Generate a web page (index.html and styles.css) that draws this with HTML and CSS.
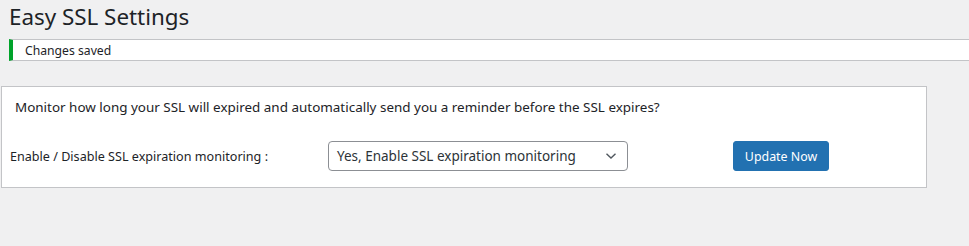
FILE: index.html
```html
<!DOCTYPE html>
<html>
<head>
<meta charset="utf-8">
<link rel="stylesheet" href="styles.css">
</head>
<body>
<div class="wrap">
  <h1 class="title">Easy SSL Settings</h1>
  <div class="notice"><p>Changes saved</p></div>
  <div class="card">
    <p class="intro">Monitor how long your SSL will expired and automatically send you a reminder before the SSL expires?</p>
    <div class="row">
      <label class="label">Enable / Disable SSL expiration monitoring :</label>
      <div class="select">
        <span>Yes, Enable SSL expiration monitoring</span>
        <svg width="12" height="8" viewBox="0 0 12 8"><path d="M1.5 1.8 L6 6 L10.5 1.8" fill="none" stroke="#50575e" stroke-width="1.4"/></svg>
      </div>
      <button class="btn">Update Now</button>
    </div>
  </div>
</div>
</body>
</html>
```
FILE: styles.css
```css
html, body { margin: 0; padding: 0; }
body {
  background: #f0f0f1;
  font-family: "Noto Sans", "Open Sans", sans-serif;
  color: #1d2327;
  width: 969px;
  height: 246px;
  overflow: hidden;
}
.wrap { padding-top: 2px; }
.title {
  font-size: 22.4px;
  font-weight: 400;
  margin: 0 0 0 9px;
  line-height: 30px;
  height: 37px;
}
.notice {
  margin-left: 9px;
  background: #fff;
  border: 1px solid #c3c4c7;
  border-left: 4px solid #00a32a;
  border-right: none;
  height: 20px;
  display: flex;
  align-items: center;
}
.notice p {
  margin: 0 0 0 12px;
  font-size: 12.2px;
}
.card {
  margin: 25px 0 0 1px;
  width: 924px;
  height: 100px;
  background: #fff;
  border: 1px solid #c3c4c7;
}
.intro {
  margin: 10px 0 0 13px;
  font-size: 13.45px;
  line-height: 20px;
}
.row {
  display: flex;
  align-items: center;
  margin-top: 24px;
  padding-left: 8px;
}
.label {
  font-size: 12.6px;
  width: 318px;
}
.select {
  box-sizing: border-box;
  width: 300px;
  height: 30px;
  border: 1px solid #8c8f94;
  border-radius: 4px;
  display: flex;
  align-items: center;
  justify-content: space-between;
  padding: 0 10px 0 8px;
  font-size: 13.5px;
  color: #2c3338;
}
.btn {
  margin-left: 105px;
  height: 30px;
  width: 96px;
  background: #2271b1;
  border: 1px solid #2271b1;
  border-radius: 3px;
  color: #fff;
  font-family: inherit;
  font-size: 12.4px;
  padding: 0;
}
```
